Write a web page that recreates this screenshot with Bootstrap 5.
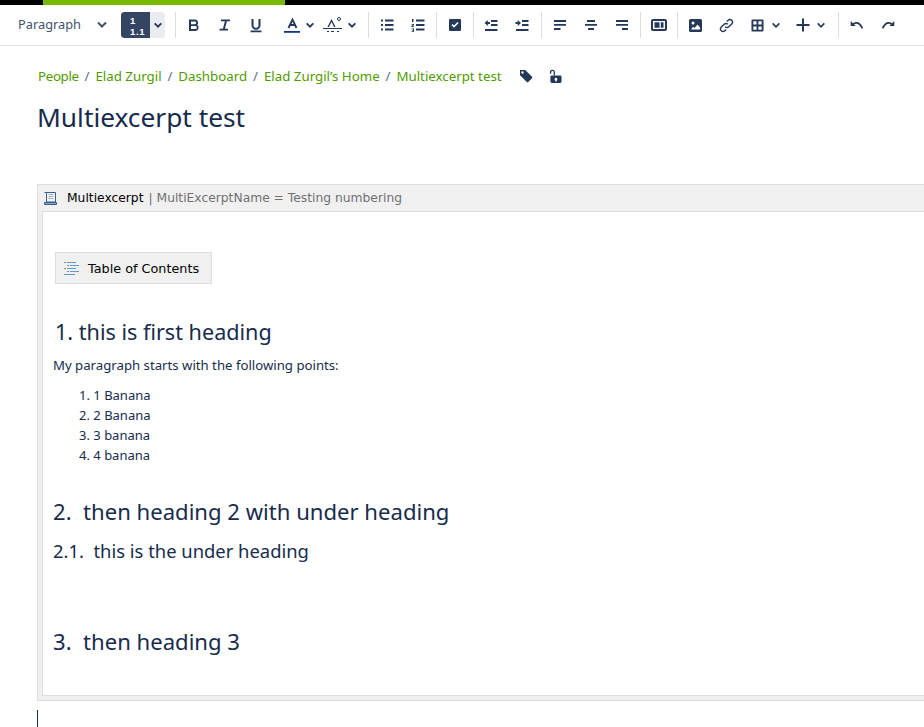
<!DOCTYPE html>
<html lang="en">
<head>
<meta charset="utf-8">
<title>Multiexcerpt test</title>
<link rel="stylesheet" href="https://cdn.jsdelivr.net/npm/bootstrap@5.3.0/dist/css/bootstrap.min.css">
<style>
html,body{height:727px;overflow:hidden}
body{font-family:"Noto Sans",sans-serif;color:#172b4d;font-size:13.2px;background:#fff}
.topline{height:5px;background:#000}
.topline-fill{margin-left:43px;width:242px;height:5px;background:#78b900}
.tb{height:41px;padding-left:18px;border-bottom:1px solid #e1e1e1;color:#253858}
.tb svg{display:block;fill:currentColor}
.para{width:95px;font-size:12.8px;color:#42526e;margin-right:8px}
.para-chev{margin-left:auto;margin-right:5px}
.hbtn{width:44px;height:26px;background:#ebecf0;border-radius:3px;margin-right:8px;overflow:hidden}
.hbtn-dark{width:29px;height:26px;background:#344563;color:#fff;font-family:"Liberation Sans",sans-serif;font-size:9.5px;line-height:11px;font-weight:700;letter-spacing:.7px;padding:3px 0 0 9px;border-radius:3px 0 0 3px}
.hbtn-chev{width:15px}
.sep{width:1px;height:26px;background:#ddd;margin:0 3px 0 2px}
.sep-a{margin-right:2px}
.sep-b{margin-left:3px}
.slot{width:31px;height:26px;padding-right:2px}
.grp{width:40px;height:26px}
.grp-a{margin-left:8px;padding-left:2px}
.grp-b{width:46px;padding-left:3px}
.grp-t{margin-left:2px;padding-left:6px}
.grp-p{margin-left:6px;width:45px;padding-left:5px}
.chev-a{margin-left:3px}
.chev-b{margin-left:5px}
.chev-t{margin-left:7px}
.chev-p{margin-left:6px}
.pagebody{padding:0 0 0 37px}
.crumbs{margin:0;padding:19px 0 0 1px;height:40px;line-height:20px;font-size:13.3px;list-style:none}
.crumbs a{color:#4f9a00;text-decoration:none}
.crumb-tight{letter-spacing:-.33px}
.crumb-sep{color:#5e6c84;margin:0 5.9px}
.crumb-ico{margin-left:17px;color:#253858}
.crumb-ico2{margin-left:16px;color:#253858}
.pgtitle{font-size:26.3px;font-weight:400;line-height:34px;margin:14px 0 50px 0;color:#172b4d}
.macro{margin-right:-80px;background:#f0f0f0;border:1px solid #ddd;height:517px;padding:0 4px 4px 4px}
.macro-head{height:26px;font-family:"DejaVu Sans",sans-serif;font-size:12.3px;color:#000}
.macro-head svg{margin:0 9px 0 1px}
.macro-param{color:#707070;margin-left:5px}
.macro-body{background:#fff;border:1px solid #ddd;height:485px;padding:40px 10px 0 10px}
.tocbox{width:157px;height:32px;margin-left:2px;background:#f0f0f0;border:1px solid #ddd;font-family:"DejaVu Sans",sans-serif;font-size:12.8px;color:#000;padding-left:8px}
.tocbox svg{margin-right:8px}
.toc-label{padding-top:2px}
.h-first{font-size:21.6px;font-weight:400;line-height:32px;margin:32px 0 0 2px}
.intro{line-height:20px;margin:7px 0 0}
.points{margin:10px 0 0;padding:0 0 0 26px;line-height:20px;font-size:13px;list-style-position:inside}
.h-two{font-size:22.1px;font-weight:400;line-height:32px;margin:30px 0 0}
.h-sub{font-size:18.4px;font-weight:400;line-height:28px;margin:10px 0 0}
.h-three{font-size:22.1px;font-weight:400;line-height:32px;margin:60px 0 0}
.caret{width:1px;height:17px;background:#172b4d;margin-top:9px}
</style>
</head>
<body>
<div class="topline"><div class="topline-fill"></div></div>
<div class="tb d-flex align-items-center">
  <div class="para d-flex align-items-center"><span>Paragraph</span>
    <svg class="para-chev" width="12" height="8" viewBox="0 0 12 8"><path d="M2 1.5 6 5.5 10 1.5" fill="none" stroke="currentColor" stroke-width="2"/></svg></div>
  <div class="hbtn d-flex">
    <div class="hbtn-dark">1<br>1.1</div>
    <div class="hbtn-chev d-flex align-items-center justify-content-center"><svg width="10" height="7" viewBox="0 0 12 8"><path d="M2 1.5 6 5.5 10 1.5" fill="none" stroke="currentColor" stroke-width="2.2"/></svg></div>
  </div>
  <div class="sep"></div>
  <div class="slot d-flex align-items-center justify-content-center"><svg width="16" height="16" viewBox="0 0 16 16"><path d="M3 2.5h6a3.2 3.2 0 0 1 2.3 5.4A3.4 3.4 0 0 1 9.6 14H3zM5 4.400v2.900h3.800a1.450 1.450 0 0 0 0-2.900zM5 9.100v3h4.400a1.500 1.500 0 0 0 0-3z" fill-rule="evenodd"/></svg></div>
  <div class="slot d-flex align-items-center justify-content-center"><svg width="16" height="16" viewBox="0 0 16 16"><path d="M4 2.500h9v1.800H9.900l-2 7.400H11V13.500H2.500V11.700H5.900l2-7.400H4z"/></svg></div>
  <div class="slot d-flex align-items-center justify-content-center"><svg width="16" height="16" viewBox="0 0 16 16"><path d="M3.500 2H5.500V8.200a2.500 2.500 0 0 0 5 0V2H12.500V8.200a4.500 4.500 0 0 1-9 0zM2.500 13.600H13.500V15.200H2.500z"/></svg></div>
  <div class="grp grp-a d-flex align-items-center">
    <svg width="20" height="18" viewBox="0 0 20 18"><path d="M6.500 12 10.500 3.500 14.500 12M8 9H13" fill="none" stroke="currentColor" stroke-width="1.800"/><path fill="#0b3a82" d="M2 15h16v1.800H2z"/></svg>
    <svg class="chev-a" width="10" height="7" viewBox="0 0 12 8"><path d="M2 1.500 6 5.500 10 1.500" fill="none" stroke="currentColor" stroke-width="2.200"/></svg>
  </div>
  <div class="grp grp-b d-flex align-items-center">
    <svg width="19" height="18" viewBox="0 0 19 18"><path d="M5.200 11 8.500 4.500 11.800 11" fill="none" stroke="currentColor" stroke-width="1.400"/><circle cx="16" cy="3" r="1.500" fill="none" stroke="currentColor"/><path d="M0 12h19v1H0zM4 15h2v1H4zM8 15h3v1H8zM14 15h2v1h-2z"/></svg>
    <svg class="chev-b" width="10" height="7" viewBox="0 0 12 8"><path d="M2 1.500 6 5.500 10 1.500" fill="none" stroke="currentColor" stroke-width="2.200"/></svg>
  </div>
  <div class="sep"></div>
  <div class="slot d-flex align-items-center justify-content-center"><svg width="14" height="14" viewBox="0 0 14 14"><path d="M1 1.500h2v2H1zM1 6h2v2H1zM1 10.500h2v2H1zM5 1.500h8.500v2H5zM5 6h8.500v2H5zM5 10.500h8.500v2H5z"/></svg></div>
  <div class="slot d-flex align-items-center justify-content-center"><svg width="14" height="14" viewBox="0 0 14 14"><path d="M1 1h1.500v3H1zM.5 6h2.500v1l-1.200 1.200H3V9H.5V8L2 6.800H.5zM.5 10.500H3v3.200H.5V13H2v-.5H1v-.6h1v-.6H.5zM5 1.500h8.500v2H5zM5 6h8.500v2H5zM5 10.500h8.500v2H5z"/></svg></div>
  <div class="sep"></div>
  <div class="slot d-flex align-items-center justify-content-center"><svg width="14" height="14" viewBox="0 0 14 14"><path fill-rule="evenodd" d="M2 1h10a1 1 0 0 1 1 1v10a1 1 0 0 1-1 1H2a1 1 0 0 1-1-1V2a1 1 0 0 1 1-1zM3.500 7.200 6 9.800l4.700-4.800-1.200-1.100L6 7.500 4.600 6.100z"/></svg></div>
  <div class="sep sep-a"></div>
  <div class="slot d-flex align-items-center justify-content-center"><svg width="14" height="14" viewBox="0 0 14 14"><path d="M7 2h6.500v2H7zM7 6h6.500v2H7zM1 11h12.500v2H1zM.5 5 3.800 2v2H6v2H3.800v2z"/></svg></div>
  <div class="slot d-flex align-items-center justify-content-center"><svg width="14" height="14" viewBox="0 0 14 14"><path d="M7 2h6.500v2H7zM7 6h6.500v2H7zM1 11h12.500v2H1zM6 5 2.700 2v2H.5v2h2.200v2z"/></svg></div>
  <div class="sep sep-b"></div>
  <div class="slot d-flex align-items-center justify-content-center"><svg width="14" height="14" viewBox="0 0 14 14"><path d="M1 2h12v2H1zM1 6h12v1.800H1zM1 10h6.500v2H1z"/></svg></div>
  <div class="slot d-flex align-items-center justify-content-center"><svg width="14" height="14" viewBox="0 0 14 14"><path d="M3 2h8v2H3zM1 6h12v1.800H1zM4 10h6v2H4z"/></svg></div>
  <div class="slot d-flex align-items-center justify-content-center"><svg width="14" height="14" viewBox="0 0 14 14"><path d="M1 2h12v2H1zM1 6h12v1.800H1zM7 10h6v2H7z"/></svg></div>
  <div class="sep"></div>
  <div class="slot d-flex align-items-center justify-content-center"><svg width="16" height="12" viewBox="0 0 16 12"><path fill-rule="evenodd" d="M2 0h12a2 2 0 0 1 2 2v8a2 2 0 0 1-2 2H2a2 2 0 0 1-2-2V2a2 2 0 0 1 2-2zM2 2v8h12V2z"/><path d="M3.500 3.200h5v5.600h-5zM9.800 3.200h2.700v5.600H9.800z"/></svg></div>
  <div class="sep"></div>
  <div class="slot d-flex align-items-center justify-content-center"><svg width="13" height="13" viewBox="0 0 13 13"><path fill-rule="evenodd" d="M1.500 0h10A1.500 1.500 0 0 1 13 1.500v10a1.500 1.500 0 0 1-1.500 1.500h-10A1.500 1.500 0 0 1 0 11.500v-10A1.500 1.500 0 0 1 1.500 0zM4 2.500a1.500 1.500 0 1 0 0 3 1.500 1.500 0 0 0 0-3zM2 10.500h9.200V8.700L8.500 5.500 5.500 9 4 7.800z"/></svg></div>
  <div class="slot d-flex align-items-center justify-content-center"><svg width="15" height="15" viewBox="0 0 15 15"><g fill="none" stroke="currentColor" stroke-width="1.400"><path d="M6.200 8.800a2.500 2.500 0 0 0 3.600 0l2.900-2.900a2.500 2.500 0 0 0-3.600-3.600L7.800 3.600"/><path d="M8.800 6.200a2.500 2.500 0 0 0-3.600 0L2.300 9.100a2.500 2.500 0 0 0 3.600 3.600l1.300-1.300"/></g></svg></div>
  <div class="grp grp-t d-flex align-items-center">
    <svg width="13" height="13" viewBox="0 0 14 14"><path fill-rule="evenodd" d="M2 .5h10A1.500 1.500 0 0 1 13.500 2v10a1.500 1.500 0 0 1-1.500 1.500H2A1.500 1.500 0 0 1 .5 12V2A1.500 1.500 0 0 1 2 .5zM2.500 2.500v3.500h3.500V2.500zM8 2.500v3.500h3.500V2.500zM2.500 8v3.500h3.500V8zM8 8v3.500h3.500V8z"/></svg>
    <svg class="chev-t" width="10" height="7" viewBox="0 0 12 8"><path d="M2 1.500 6 5.500 10 1.500" fill="none" stroke="currentColor" stroke-width="2"/></svg>
  </div>
  <div class="grp grp-p d-flex align-items-center">
    <svg width="14" height="14" viewBox="0 0 14 14"><path d="M6 .5h2V6h5.500v2H8v5.500H6V8H.5V6H6z"/></svg>
    <svg class="chev-p" width="10" height="7" viewBox="0 0 12 8"><path d="M2 1.500 6 5.500 10 1.500" fill="none" stroke="currentColor" stroke-width="2"/></svg>
  </div>
  <div class="sep"></div>
  <div class="slot d-flex align-items-center justify-content-center"><svg width="14" height="9" viewBox="0 0 15 10"><path d="M.5 0v5.500H6L4.200 3.700C6.600 2.200 10 2.800 12.600 8.500l1.700-.8C11.500 1 7 0 3 2.500z"/></svg></div>
  <div class="slot d-flex align-items-center justify-content-center"><svg width="14" height="9" viewBox="0 0 15 10"><path d="M14.500 0v5.500H9l1.800-1.800C8.400 2.200 5 2.800 2.400 8.500L.7 7.700C3.500 1 8 0 12 2.500z"/></svg></div>
</div>

<div class="pagebody">
  <ol class="crumbs d-flex align-items-center">
    <li><a class="crumb-tight" href="#">People</a><span class="crumb-sep">/</span></li>
    <li><a href="#">Elad Zurgil</a><span class="crumb-sep">/</span></li>
    <li><a href="#">Dashboard</a><span class="crumb-sep">/</span></li>
    <li><a href="#">Elad Zurgil’s Home</a><span class="crumb-sep">/</span></li>
    <li><a href="#">Multiexcerpt test</a></li>
    <li class="crumb-ico"><svg class="d-block" width="14" height="14" viewBox="0 0 14 14" fill="currentColor"><path fill-rule="evenodd" d="M1 1h5.200L13 7.800a1 1 0 0 1 0 1.400l-3.800 3.800a1 1 0 0 1-1.400 0L1 6.200zM3.500 2.300a1.200 1.200 0 1 0 0 2.400 1.200 1.200 0 0 0 0-2.400z"/></svg></li>
    <li class="crumb-ico2"><svg class="d-block" width="13" height="14" viewBox="0 0 14 15" fill="currentColor"><path fill-rule="evenodd" d="M3 7h9a1.500 1.500 0 0 1 1.500 1.500v5A1.500 1.500 0 0 1 12 15H3a1.500 1.500 0 0 1-1.500-1.500v-5A1.500 1.500 0 0 1 3 7zM7.500 9.500a1.500 1.500 0 0 0-.7 2.800V13.500h1.400v-1.200a1.500 1.500 0 0 0-.7-2.800z"/><path d="M1 5V3.500a2.700 2.700 0 0 1 5.400 0V7H5V3.500a1.300 1.300 0 0 0-2.600 0V5z"/></svg></li>
  </ol>
  <h1 class="pgtitle">Multiexcerpt test</h1>

  <div class="macro">
    <div class="macro-head d-flex align-items-center">
      <svg width="15" height="15" viewBox="0 0 15 15"><path d="M3.500 1.500h9v9.500h-9z" fill="#eef3f8" stroke="#3d5f85"/><path d="M5.500 3.500h5M5.500 5.500h5M5.500 7.500h5" stroke="#9fb3c8"/><path d="M1.500 11.500h12v2h-12z" fill="#8aa6c4" stroke="#3d5f85"/><path d="M1.500 1.500h2v2" fill="none" stroke="#3d5f85"/></svg>
      <span>Multiexcerpt</span><span class="macro-param">| MultiExcerptName = Testing numbering</span>
    </div>
    <div class="macro-body">
      <div class="tocbox d-flex align-items-center">
        <svg width="16" height="15" viewBox="0 0 16 15"><path d="M0 1.500h2M3 4.500h2M0 7.500h2M3 10.500h2M0 13.500h2" stroke="#888"/><path d="M3 1.500h9M6 4.500h9M3 7.500h9M6 10.500h9M2 13.500h9" stroke="#5b9bd5"/></svg>
        <span class="toc-label">Table of Contents</span>
      </div>
      <h2 class="h-first">1. this is first heading</h2>
      <p class="intro">My paragraph starts with the following points:</p>
      <ol class="points">
        <li>1 Banana</li>
        <li>2 Banana</li>
        <li>3 banana</li>
        <li>4 banana</li>
      </ol>
      <h2 class="h-two">2.&nbsp; then heading 2 with under heading</h2>
      <h3 class="h-sub">2.1.&nbsp; this is the under heading</h3>
      <h2 class="h-three">3.&nbsp; then heading 3</h2>
    </div>
  </div>
  <div class="caret"></div>
</div>
<script src="https://cdn.jsdelivr.net/npm/bootstrap@5.3.0/dist/js/bootstrap.bundle.min.js"></script>
</body>
</html>
